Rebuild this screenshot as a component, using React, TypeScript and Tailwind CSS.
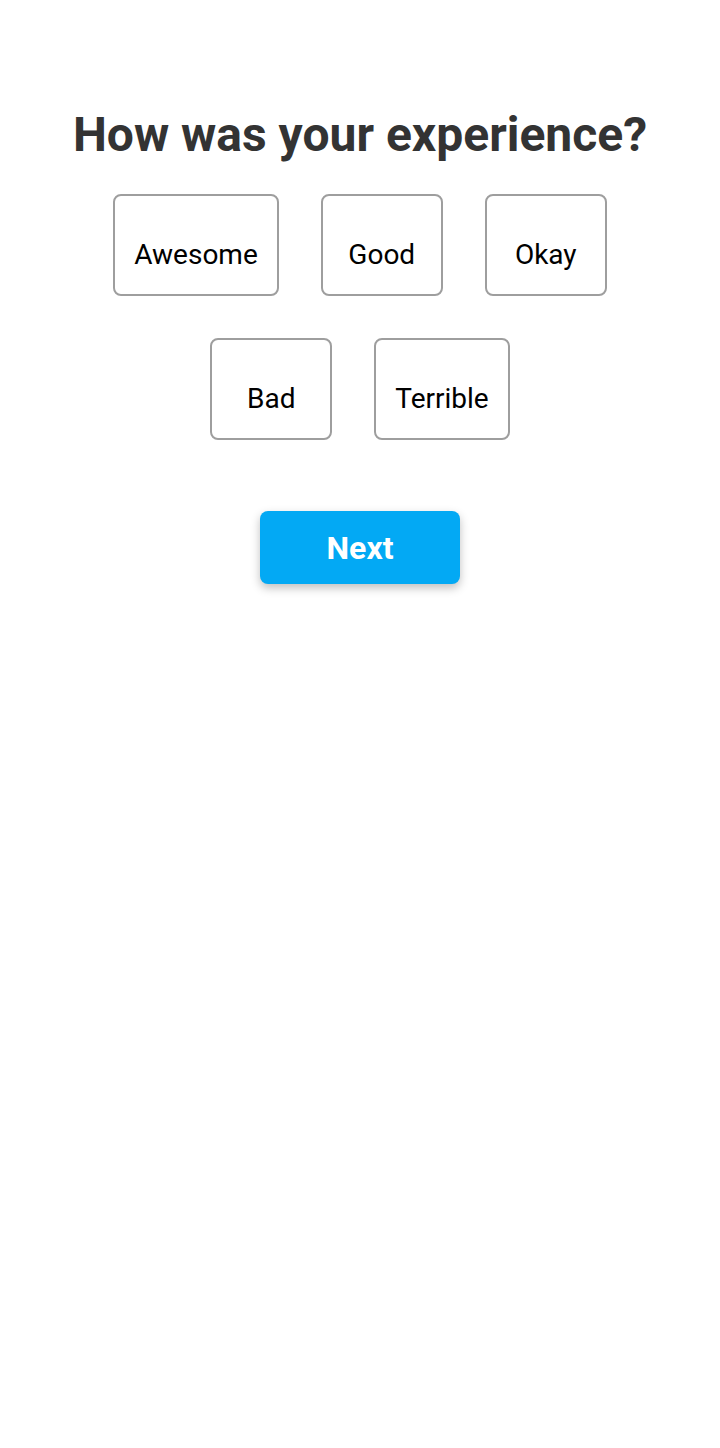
const OPTIONS = ['Awesome', 'Good', 'Okay', 'Bad', 'Terrible']

export default function App() {
  return (
    <div className="min-h-[1448px] w-full bg-white font-['Roboto',sans-serif]">
      <div className="flex flex-col items-center pt-[104px]">
        <h1 className="text-[48px] font-bold leading-[62px] text-[#333333]">How was your experience?</h1>

        <div className="mt-[28px] flex w-[600px] flex-wrap justify-center gap-[42px]">
          {OPTIONS.map(o => (
            <button
              key={o}
              className="flex h-[102px] min-w-[122px] items-start justify-center rounded-[8px] border-2 border-[#9e9e9e] bg-white px-[19px] pt-[43px] text-[28px] leading-[32px] text-black"
            >
              {o}
            </button>
          ))}
        </div>

        <button className="mt-[71px] h-[73px] w-[200px] rounded-[8px] bg-[#03a9f4] text-[32px] font-bold text-white shadow-[0_4px_10px_rgba(0,0,0,0.25)]">
          Next
        </button>
      </div>
    </div>
  )
}
